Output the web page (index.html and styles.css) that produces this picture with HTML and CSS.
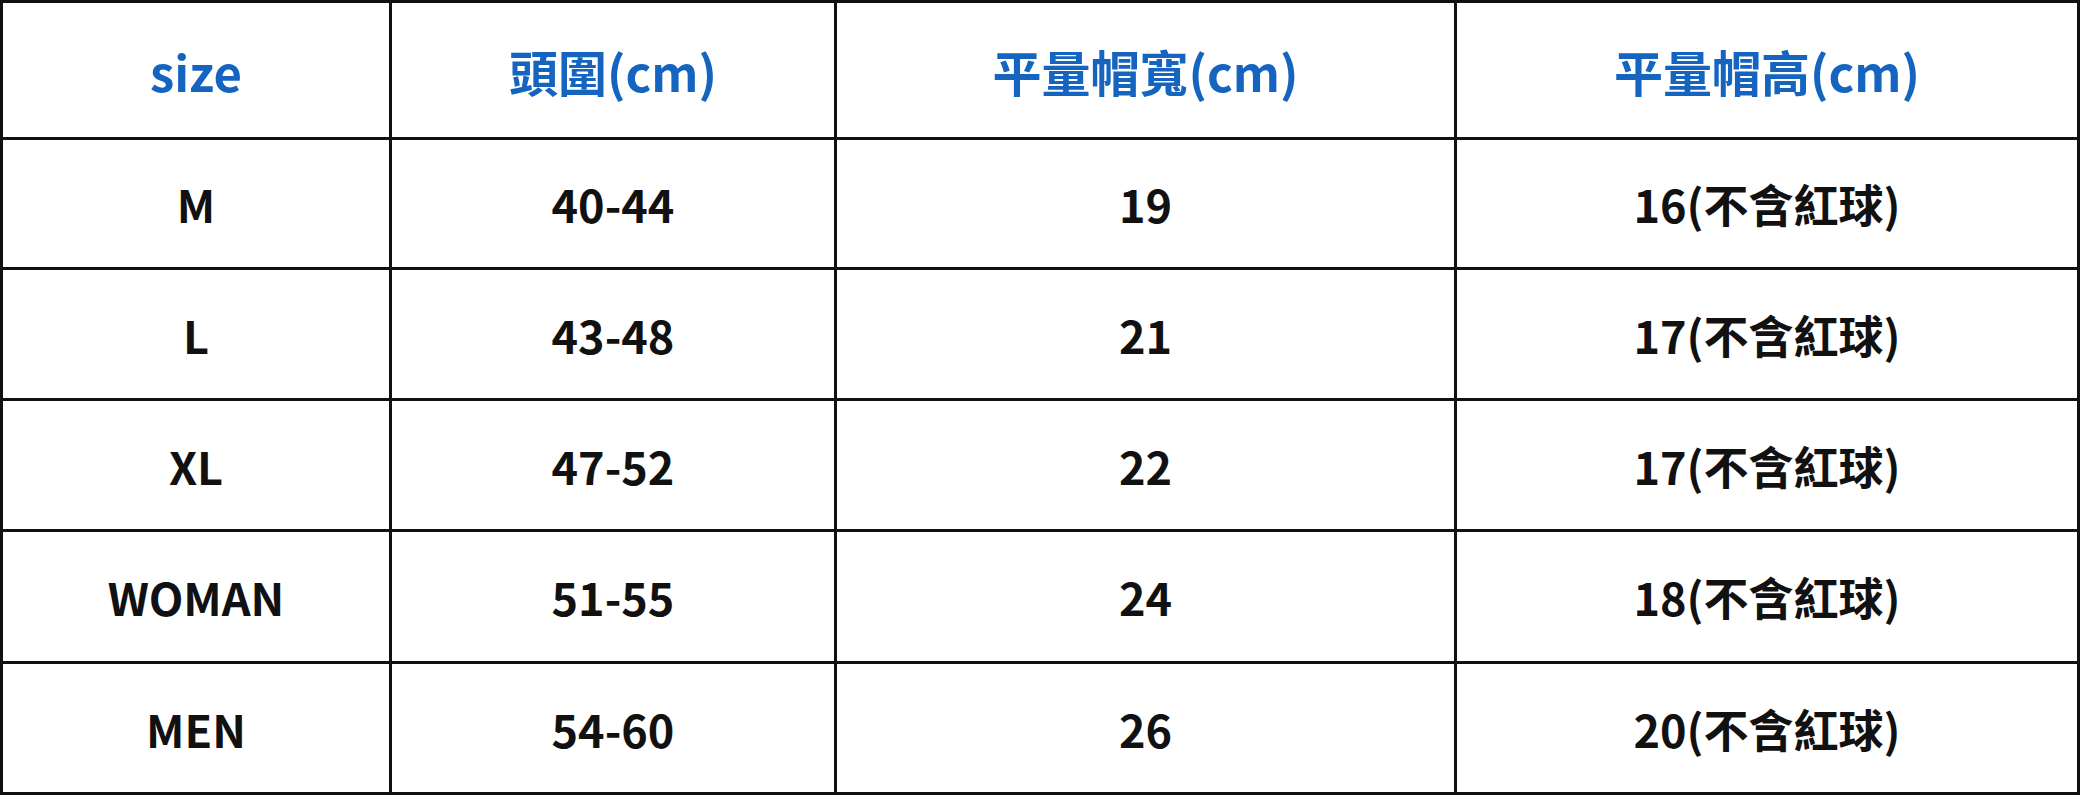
FILE: index.html
```html
<!DOCTYPE html>
<html lang="zh-Hant">
<head>
<meta charset="utf-8">
<title>尺寸表</title>
<link rel="stylesheet" href="styles.css">
</head>
<body>
<div class="size-table">
  <div class="cell head">size</div>
  <div class="cell head">頭圍(cm)</div>
  <div class="cell head">平量帽寬(cm)</div>
  <div class="cell head">平量帽高(cm)</div>

  <div class="cell">M</div>
  <div class="cell">40-44</div>
  <div class="cell">19</div>
  <div class="cell">16(不含紅球)</div>

  <div class="cell">L</div>
  <div class="cell">43-48</div>
  <div class="cell">21</div>
  <div class="cell">17(不含紅球)</div>

  <div class="cell">XL</div>
  <div class="cell">47-52</div>
  <div class="cell">22</div>
  <div class="cell">17(不含紅球)</div>

  <div class="cell">WOMAN</div>
  <div class="cell">51-55</div>
  <div class="cell">24</div>
  <div class="cell">18(不含紅球)</div>

  <div class="cell">MEN</div>
  <div class="cell">54-60</div>
  <div class="cell">26</div>
  <div class="cell">20(不含紅球)</div>
</div>
</body>
</html>
```
FILE: styles.css
```css
html, body {
  margin: 0;
  padding: 0;
  background: #ffffff;
}

.size-table {
  display: grid;
  grid-template-columns: 386px 442px 617px 620px;
  grid-template-rows: 134px 127px 128px 128px 129px 128px;
  gap: 3px;
  padding: 3px;
  width: max-content;
  background: #111111;
  font-family: "Noto Sans CJK TC", "Noto Sans CJK SC", sans-serif;
  font-weight: 700;
  font-size: 45px;
  color: #111111;
}

.cell {
  background: #ffffff;
  display: flex;
  align-items: center;
  justify-content: center;
  line-height: 1;
}

.head {
  color: #1565c0;
  font-size: 49px;
}
```
